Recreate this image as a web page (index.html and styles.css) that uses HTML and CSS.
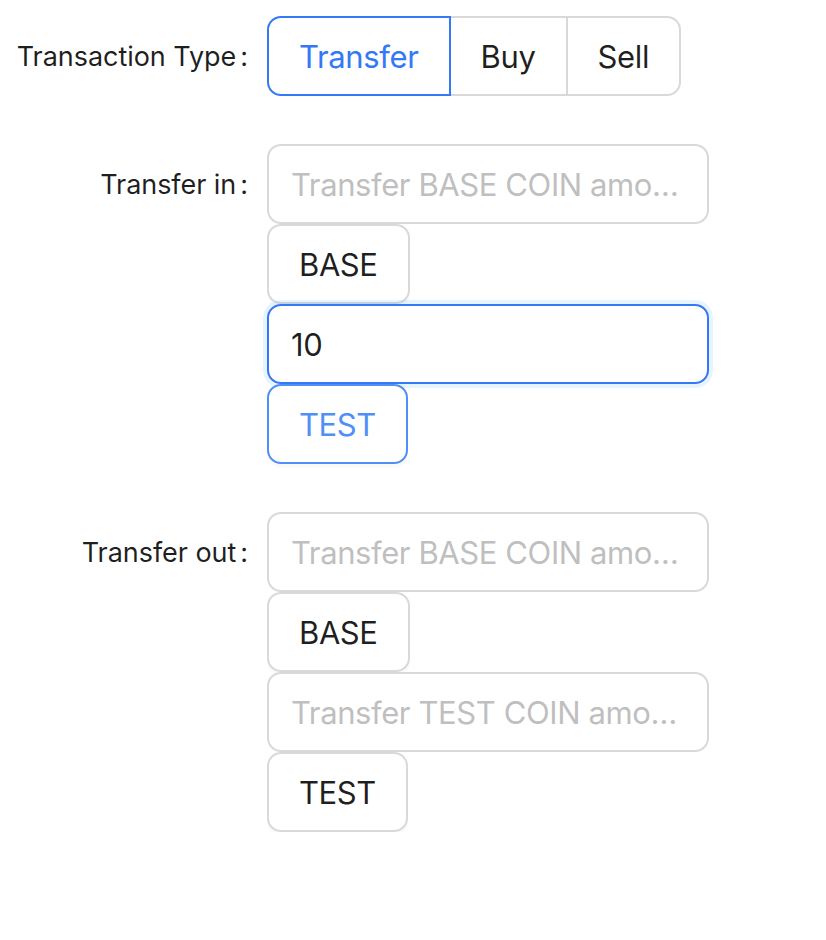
FILE: index.html
```html
<!DOCTYPE html>
<html lang="en">
<head>
<meta charset="utf-8">
<title>Transaction</title>
<link rel="stylesheet" href="styles.css">
</head>
<body>
<form class="form">
  <div class="row">
    <label class="label">Transaction Type<span class="colon">:</span></label>
    <div class="control">
      <div class="radio-group">
        <span class="radio checked">Transfer</span>
        <span class="radio">Buy</span>
        <span class="radio">Sell</span>
      </div>
    </div>
  </div>
  <div class="row">
    <label class="label">Transfer in<span class="colon">:</span></label>
    <div class="control stack">
      <input class="input" type="text" placeholder="Transfer BASE COIN amount">
      <button type="button" class="btn">BASE</button>
      <input class="input focused" type="text" value="10">
      <button type="button" class="btn hover">TEST</button>
    </div>
  </div>
  <div class="row">
    <label class="label">Transfer out<span class="colon">:</span></label>
    <div class="control stack">
      <input class="input" type="text" placeholder="Transfer BASE COIN amount">
      <button type="button" class="btn">BASE</button>
      <input class="input" type="text" placeholder="Transfer TEST COIN amount">
      <button type="button" class="btn">TEST</button>
    </div>
  </div>
</form>
</body>
</html>
```
FILE: styles.css
```css
* { box-sizing: border-box; }
html, body { margin: 0; background: #fff; }
body {
  font-family: Inter, "Liberation Sans", sans-serif;
  color: rgba(0,0,0,0.88);
  padding-top: 16px;
}
.form { display: flex; flex-direction: column; gap: 48px; }
.row { display: grid; grid-template-columns: 267px 442px; align-items: start; }
.label {
  height: 80px;
  display: flex;
  align-items: center;
  justify-content: flex-end;
  font-size: 27px;
  letter-spacing: -0.05px;
  white-space: nowrap;
}
.colon { margin: 0 19px 0 4px; }
.control { display: flex; flex-direction: column; align-items: flex-start; }
.radio-group { display: flex; height: 80px; }
.radio {
  display: flex; align-items: center;
  height: 80px;
  padding: 0 30px;
  font-size: 31px;
  letter-spacing: -0.35px;
  border: 2px solid #d9d9d9;
  border-left-width: 0;
  color: rgba(0,0,0,0.88);
  background: #fff;
}
.radio:first-child { border-left-width: 2px; border-radius: 14px 0 0 14px; }
.radio:last-child { border-radius: 0 14px 14px 0; }
.radio.checked { border-color: #3478f6; border-left-width: 2px; color: #3478f6; }
.radio.checked + .radio { border-left-width: 0; }
.input {
  width: 442px; height: 80px;
  border: 2px solid #d9d9d9;
  border-radius: 14px;
  padding: 0 22px;
  font: inherit;
  font-size: 31px;
  letter-spacing: -0.4px;
  color: rgba(0,0,0,0.88);
  text-overflow: ellipsis;
  outline: none;
  background: #fff;
}
.input::placeholder { color: #bfbfbf; }
.input.focused { border-color: #3478f6; box-shadow: 0 0 0 4px rgba(5,145,255,0.1); }
.btn {
  height: 80px;
  padding: 0 30px;
  border: 2px solid #d9d9d9;
  border-radius: 14px;
  background: #fff;
  font: inherit;
  font-size: 31px;
  letter-spacing: -0.4px;
  color: rgba(0,0,0,0.88);
  box-shadow: 0 4px 0 rgba(0,0,0,0.02);
}
.btn.hover { border-color: #4f8ff7; color: #4f8ff7; }
```
